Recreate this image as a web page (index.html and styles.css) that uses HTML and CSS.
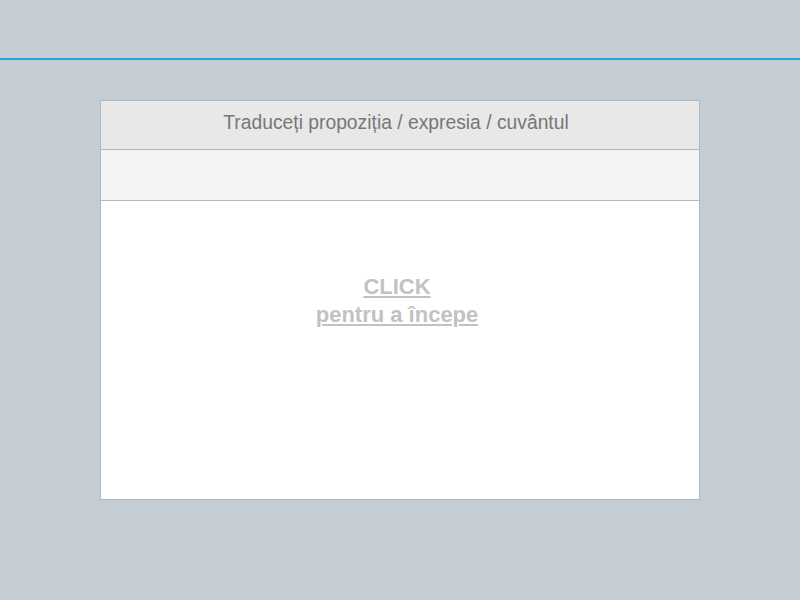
FILE: index.html
```html
<!DOCTYPE html>
<html lang="ro">
<head>
<meta charset="utf-8">
<link rel="stylesheet" href="styles.css">
</head>
<body>
<div class="topbar"></div>
<div class="card">
  <div class="card-head">Traduceți propoziția / expresia / cuvântul</div>
  <div class="card-bar"></div>
  <div class="card-body">
    <a class="start" href="#">CLICK<br>pentru a începe</a>
  </div>
</div>
</body>
</html>
```
FILE: styles.css
```css
html, body {
  margin: 0;
  padding: 0;
  background: #c5cdd4;
  font-family: "Liberation Sans", Arial, sans-serif;
  height: 600px;
  overflow: hidden;
}
.topbar {
  height: 58px;
  border-bottom: 2px solid #2a9fd8;
}
.card {
  margin: 40px 0 0 100px;
  width: 598px;
  border: 1px solid #b4b8bb;
  background: #fff;
}
.card-head {
  height: 48px;
  background: #e8e8e8;
  border-bottom: 1px solid #b4b8bb;
  color: #777;
  font-size: 19.3px;
  text-align: center;
  line-height: 44px;
  padding-right: 8px;
}
.card-bar {
  height: 50px;
  background: #f3f3f3;
  border-bottom: 1px solid #b4b8bb;
}
.card-body {
  height: 298px;
  display: flex;
  justify-content: center;
  padding-top: 72px;
  box-sizing: border-box;
  padding-right: 6px;
}
.start {
  color: #c2c2c2;
  font-weight: bold;
  font-size: 22px;
  line-height: 28px;
  text-align: center;
  text-decoration: underline;
}
```
